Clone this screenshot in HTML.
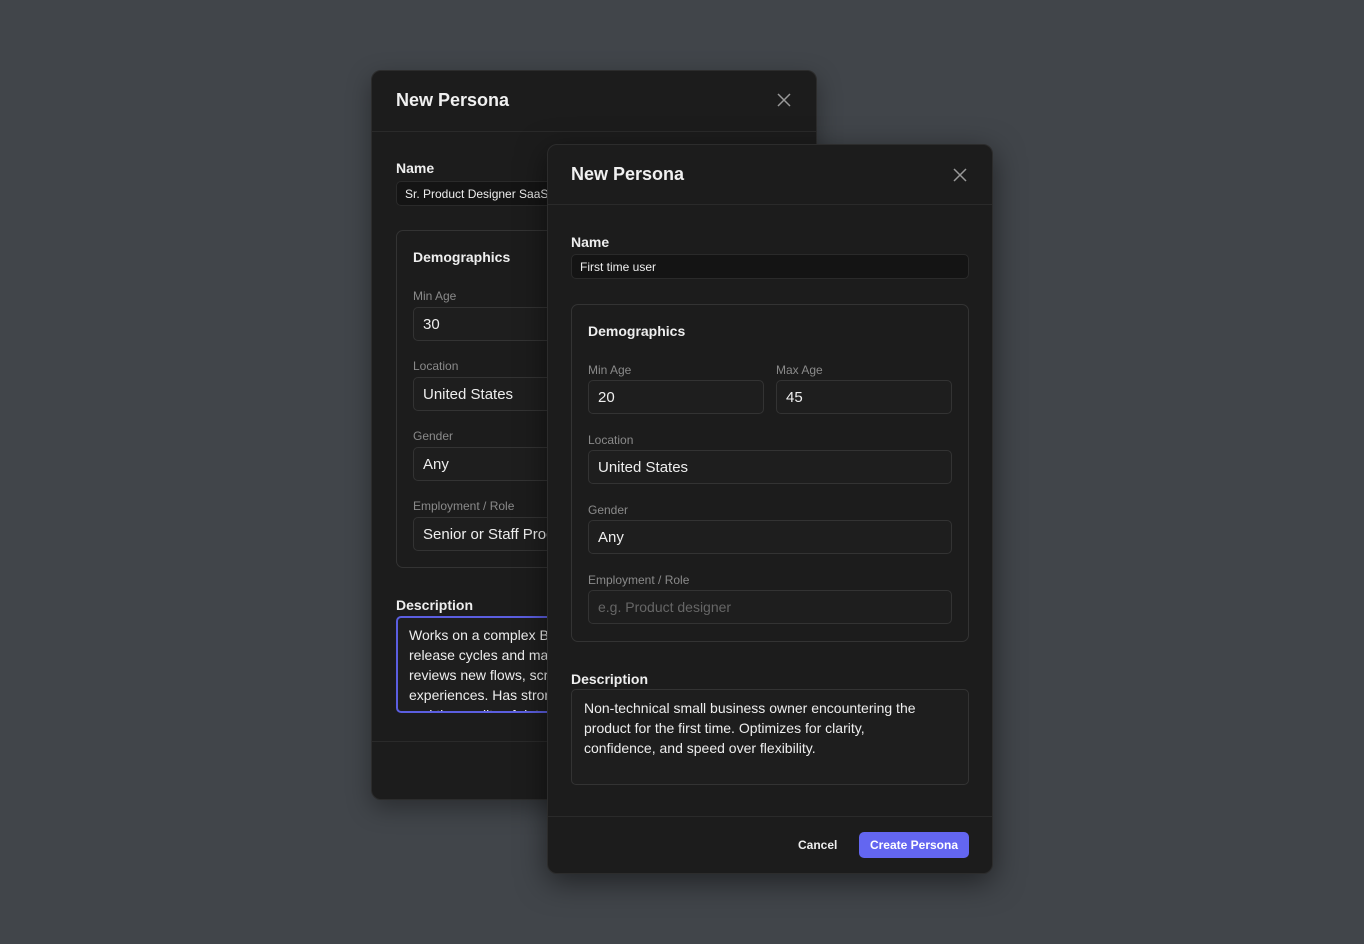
<!DOCTYPE html>
<html><head><meta charset="utf-8"><style>
*{box-sizing:border-box;margin:0;padding:0}
body{width:1364px;height:944px;background:#41454a;font-family:"Liberation Sans",sans-serif;position:relative;overflow:hidden}
.d{position:absolute;width:446px;height:730px;background:#1c1c1c;border-radius:10px;border:1px solid #2c2c2c;overflow:hidden}
.d1{left:371px;top:70px;box-shadow:0 8px 24px rgba(0,0,0,.35)}
.d2{left:547px;top:144px;box-shadow:0 8px 30px rgba(0,0,0,.5)}
.a{position:absolute}
.t{font-size:18px;font-weight:bold;color:#f0f0f0}
.hr{position:absolute;left:0;right:0;height:1px;background:#2a2a2a}
.lb{font-size:14px;font-weight:bold;color:#eee}
.sl{font-size:12px;color:#8a8a8a}
.in{position:absolute;border:1px solid #333;border-radius:5px;background:#1e1e1e;color:#eee;font-size:15px;padding-left:9px;display:flex;align-items:center;white-space:nowrap;overflow:hidden}
.nm{background:#141414;font-size:12px;padding-left:8px;border-color:#2a2a2a}
.box{position:absolute;border:1px solid #333;border-radius:7px}
.ta{position:absolute;border:1px solid #333;border-radius:5px;background:#1e1e1e;color:#eee;font-size:14px;line-height:20px;padding:8px 12px;overflow:hidden;white-space:nowrap}
</style></head><body>
<div class="d d1">
 <div class="a t" style="left:24px;top:19px">New Persona</div>
 <svg class="a" style="left:405px;top:22px" width="14" height="14" viewBox="0 0 14 14"><path d="M1 1L13 13M13 1L1 13" stroke="#999" stroke-width="1.5"/></svg>
 <div class="hr" style="top:60px"></div>
 <div class="a lb" style="left:24px;top:89px">Name</div>
 <div class="in nm" style="left:24px;top:110px;width:397px;height:25px">Sr. Product Designer SaaS</div>
 <div class="box" style="left:24px;top:159px;width:397px;height:338px"></div>
 <div class="a lb" style="left:41px;top:178px">Demographics</div>
 <div class="a sl" style="left:41px;top:218px">Min Age</div>
 <div class="in" style="left:41px;top:236px;width:175px;height:34px">30</div>
 <div class="a sl" style="left:41px;top:288px">Location</div>
 <div class="in" style="left:41px;top:306px;width:363px;height:34px">United States</div>
 <div class="a sl" style="left:41px;top:358px">Gender</div>
 <div class="in" style="left:41px;top:376px;width:363px;height:34px">Any</div>
 <div class="a sl" style="left:41px;top:428px">Employment / Role</div>
 <div class="in" style="left:41px;top:446px;width:363px;height:34px">Senior or Staff Product Designer</div>
 <div class="a lb" style="left:24px;top:526px">Description</div>
 <div class="ta" style="left:24px;top:545px;width:397px;height:97px;border:2px solid #5b5ee0;padding:7px 11px">Works on a complex B2B SaaS platform with long<br>release cycles and many stakeholders. Regularly<br>reviews new flows, screens and onboarding<br>experiences. Has strong opinions on consistency<br>and the quality of details.</div>
 <div class="hr" style="top:670px"></div>
</div>
<div class="d d2">
 <div class="a t" style="left:23px;top:19px">New Persona</div>
 <svg class="a" style="left:405px;top:23px" width="14" height="14" viewBox="0 0 14 14"><path d="M1 1L13 13M13 1L1 13" stroke="#999" stroke-width="1.5"/></svg>
 <div class="hr" style="top:59px"></div>
 <div class="a lb" style="left:23px;top:89px">Name</div>
 <div class="in nm" style="left:23px;top:109px;width:398px;height:25px">First time user</div>
 <div class="box" style="left:23px;top:159px;width:398px;height:338px"></div>
 <div class="a lb" style="left:40px;top:178px">Demographics</div>
 <div class="a sl" style="left:40px;top:218px">Min Age</div>
 <div class="in" style="left:40px;top:235px;width:176px;height:34px">20</div>
 <div class="a sl" style="left:228px;top:218px">Max Age</div>
 <div class="in" style="left:228px;top:235px;width:176px;height:34px">45</div>
 <div class="a sl" style="left:40px;top:288px">Location</div>
 <div class="in" style="left:40px;top:305px;width:364px;height:34px">United States</div>
 <div class="a sl" style="left:40px;top:358px">Gender</div>
 <div class="in" style="left:40px;top:375px;width:364px;height:34px">Any</div>
 <div class="a sl" style="left:40px;top:428px">Employment / Role</div>
 <div class="in" style="left:40px;top:445px;width:364px;height:34px;color:#666;font-size:14px">e.g. Product designer</div>
 <div class="a lb" style="left:23px;top:526px">Description</div>
 <div class="ta" style="left:23px;top:544px;width:398px;height:96px">Non-technical small business owner encountering the<br>product for the first time. Optimizes for clarity,<br>confidence, and speed over flexibility.</div>
 <div class="hr" style="top:671px"></div>
 <div class="a" style="left:250px;top:693px;font-size:12px;font-weight:bold;color:#eee">Cancel</div>
 <div class="a" style="left:311px;top:687px;width:110px;height:26px;background:#6366f1;border-radius:5px;color:#fff;font-size:12px;font-weight:bold;display:flex;align-items:center;justify-content:center">Create Persona</div>
</div>
</body></html>
